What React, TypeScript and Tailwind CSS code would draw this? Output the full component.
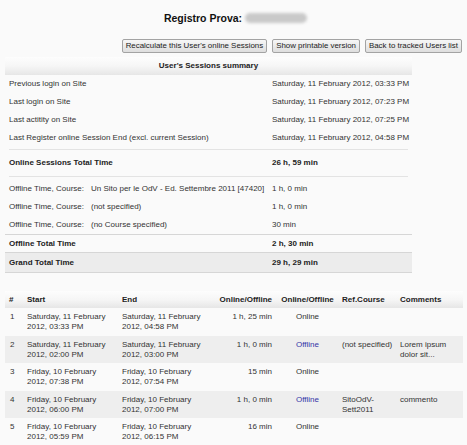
import React from 'react';

const font = { fontFamily: '"Liberation Sans", Arial, sans-serif' };

interface SessionRow {
    n: number;
    start: [string, string];
    end: [string, string];
    duration: string;
    offline: boolean;
    course?: [string, string?];
    comment?: [string, string?];
}

const sessions: SessionRow[] = [
    { n: 1, start: ['Saturday, 11 February', '2012, 03:33 PM'], end: ['Saturday, 11 February', '2012, 04:58 PM'], duration: '1 h, 25 min', offline: false },
    { n: 2, start: ['Saturday, 11 February', '2012, 02:00 PM'], end: ['Saturday, 11 February', '2012, 03:00 PM'], duration: '1 h, 0 min', offline: true, course: ['(not specified)'], comment: ['Lorem ipsum', 'dolor sit...'] },
    { n: 3, start: ['Friday, 10 February', '2012, 07:38 PM'], end: ['Friday, 10 February', '2012, 07:54 PM'], duration: '15 min', offline: false },
    { n: 4, start: ['Friday, 10 February', '2012, 06:00 PM'], end: ['Friday, 10 February', '2012, 07:00 PM'], duration: '1 h, 0 min', offline: true, course: ['SitoOdV-', 'Sett2011'], comment: ['commento'] },
    { n: 5, start: ['Friday, 10 February', '2012, 05:59 PM'], end: ['Friday, 10 February', '2012, 06:15 PM'], duration: '16 min', offline: false },
];

const Lines = ({ lines }: { lines?: (string | undefined)[] }) => (
    <>
        {lines?.filter(Boolean).map((l, i) => (
            <div key={i} className="whitespace-nowrap">{l}</div>
        ))}
    </>
);

const SummaryRow = ({ label, value }: { label: string; value: string }) => (
    <div className="h-[18px] grid grid-cols-[263px_1fr] items-center px-[4px] whitespace-nowrap">
        <span>{label}</span>
        <span>{value}</span>
    </div>
);

const OfflineRow = ({ course, value }: { course: string; value: string }) => (
    <div className="h-[18px] grid grid-cols-[82px_181px_1fr] items-center px-[4px] whitespace-nowrap">
        <span>Offline Time, Course:</span>
        <span>{course}</span>
        <span>{value}</span>
    </div>
);

export default function App() {
    return (
        <div style={font} className="w-[467px] h-[445px] overflow-hidden bg-[#fafafa] text-[8px] leading-[10px] text-[#333]">
            {/* Title */}
            <div className="pt-[12px] h-[33px] flex justify-center items-start">
                <h2 className="text-[10.5px] leading-[12px] font-bold text-[#111] flex items-center gap-[3px] pl-[4px]">
                    Registro Prova:
                    <span className="inline-block w-[62px] h-[10px] rounded-full bg-[#c9c9c9] blur-[1.5px]" />
                </h2>
            </div>

            {/* Buttons */}
            <div className="flex justify-end gap-[5px] pr-[5px] h-[24px] items-start pt-[6px]">
                {["Recalculate this User's online Sessions", 'Show printable version', 'Back to tracked Users list'].map(b => (
                    <button key={b} className="h-[14px] px-[3px] border border-[#a3a3a3] rounded-[2px] bg-gradient-to-b from-[#f7f7f7] to-[#dedede] text-[#222] text-[7.9px] leading-[12px] whitespace-nowrap">
                        {b}
                    </button>
                ))}
            </div>

            {/* Summary */}
            <div className="ml-[5px] w-[407px]">
                <div className="h-[18px] flex items-center justify-center font-bold text-[#222] bg-gradient-to-b from-[#fdfdfd] via-[#f6f6f6] to-[#e6e6e6]">
                    User's Sessions summary
                </div>
                <SummaryRow label="Previous login on Site" value="Saturday, 11 February 2012, 03:33 PM" />
                <SummaryRow label="Last login on Site" value="Saturday, 11 February 2012, 07:23 PM" />
                <SummaryRow label="Last actitity on Site" value="Saturday, 11 February 2012, 07:25 PM" />
                <SummaryRow label="Last Register online Session End (excl. current Session)" value="Saturday, 11 February 2012, 04:58 PM" />
                <div className="mt-[2px] mx-[4px] border-t border-[#e3e3e3]" />
                <div className="h-[26px] grid grid-cols-[263px_1fr] items-center px-[4px] font-bold text-[#222]">
                    <span>Online Sessions Total Time</span>
                    <span>26 h, 59 min</span>
                </div>
                <div className="mx-[4px] border-t border-[#e3e3e3] mb-[3px]" />
                <OfflineRow course="Un Sito per le OdV - Ed. Settembre 2011 [47420]" value="1 h, 0 min" />
                <OfflineRow course="(not specified)" value="1 h, 0 min" />
                <OfflineRow course="(no Course specified)" value="30 min" />
                <div className="h-[18px] border-t border-[#d6d6d6] grid grid-cols-[263px_1fr] items-center px-[4px] font-bold text-[#222]">
                    <span>Offline Total Time</span>
                    <span>2 h, 30 min</span>
                </div>
                <div className="h-[21px] border-y border-[#d6d6d6] bg-[#ececec] grid grid-cols-[263px_1fr] items-center px-[4px] font-bold text-[#222]">
                    <span>Grand Total Time</span>
                    <span>29 h, 29 min</span>
                </div>
            </div>

            {/* Sessions list */}
            <div className="ml-[5px] w-[458px] mt-[18px]">
                <div className="h-[17px] grid grid-cols-[18px_95px_97px_62px_61px_58px_67px] items-center font-bold text-[#222] bg-gradient-to-b from-[#fdfdfd] via-[#f6f6f6] to-[#e6e6e6] whitespace-nowrap">
                    <span className="pl-[4px]">#</span>
                    <span className="pl-[4px]">Start</span>
                    <span className="pl-[4px]">End</span>
                    <span className="pr-[5px] text-right">Online/Offline</span>
                    <span className="text-center">Online/Offline</span>
                    <span className="pl-[4px]">Ref.Course</span>
                    <span className="pl-[4px]">Comments</span>
                </div>
                {sessions.map((s, i) => (
                    <div
                        key={s.n}
                        className={`h-[27.5px] pt-[4px] grid grid-cols-[18px_95px_97px_62px_61px_58px_67px] items-start ${i % 2 === 1 ? 'bg-[#eeeeee]' : ''}`}
                    >
                        <span className="pl-[5px]">{s.n}</span>
                        <div className="pl-[4px]"><Lines lines={s.start} /></div>
                        <div className="pl-[4px]"><Lines lines={s.end} /></div>
                        <span className="pr-[5px] text-right whitespace-nowrap">{s.duration}</span>
                        <span className={`text-center ${s.offline ? 'text-[#3535a8]' : ''}`}>{s.offline ? 'Offline' : 'Online'}</span>
                        <div className="pl-[4px]"><Lines lines={s.course} /></div>
                        <div className="pl-[4px]"><Lines lines={s.comment} /></div>
                    </div>
                ))}
            </div>
        </div>
    );
}
